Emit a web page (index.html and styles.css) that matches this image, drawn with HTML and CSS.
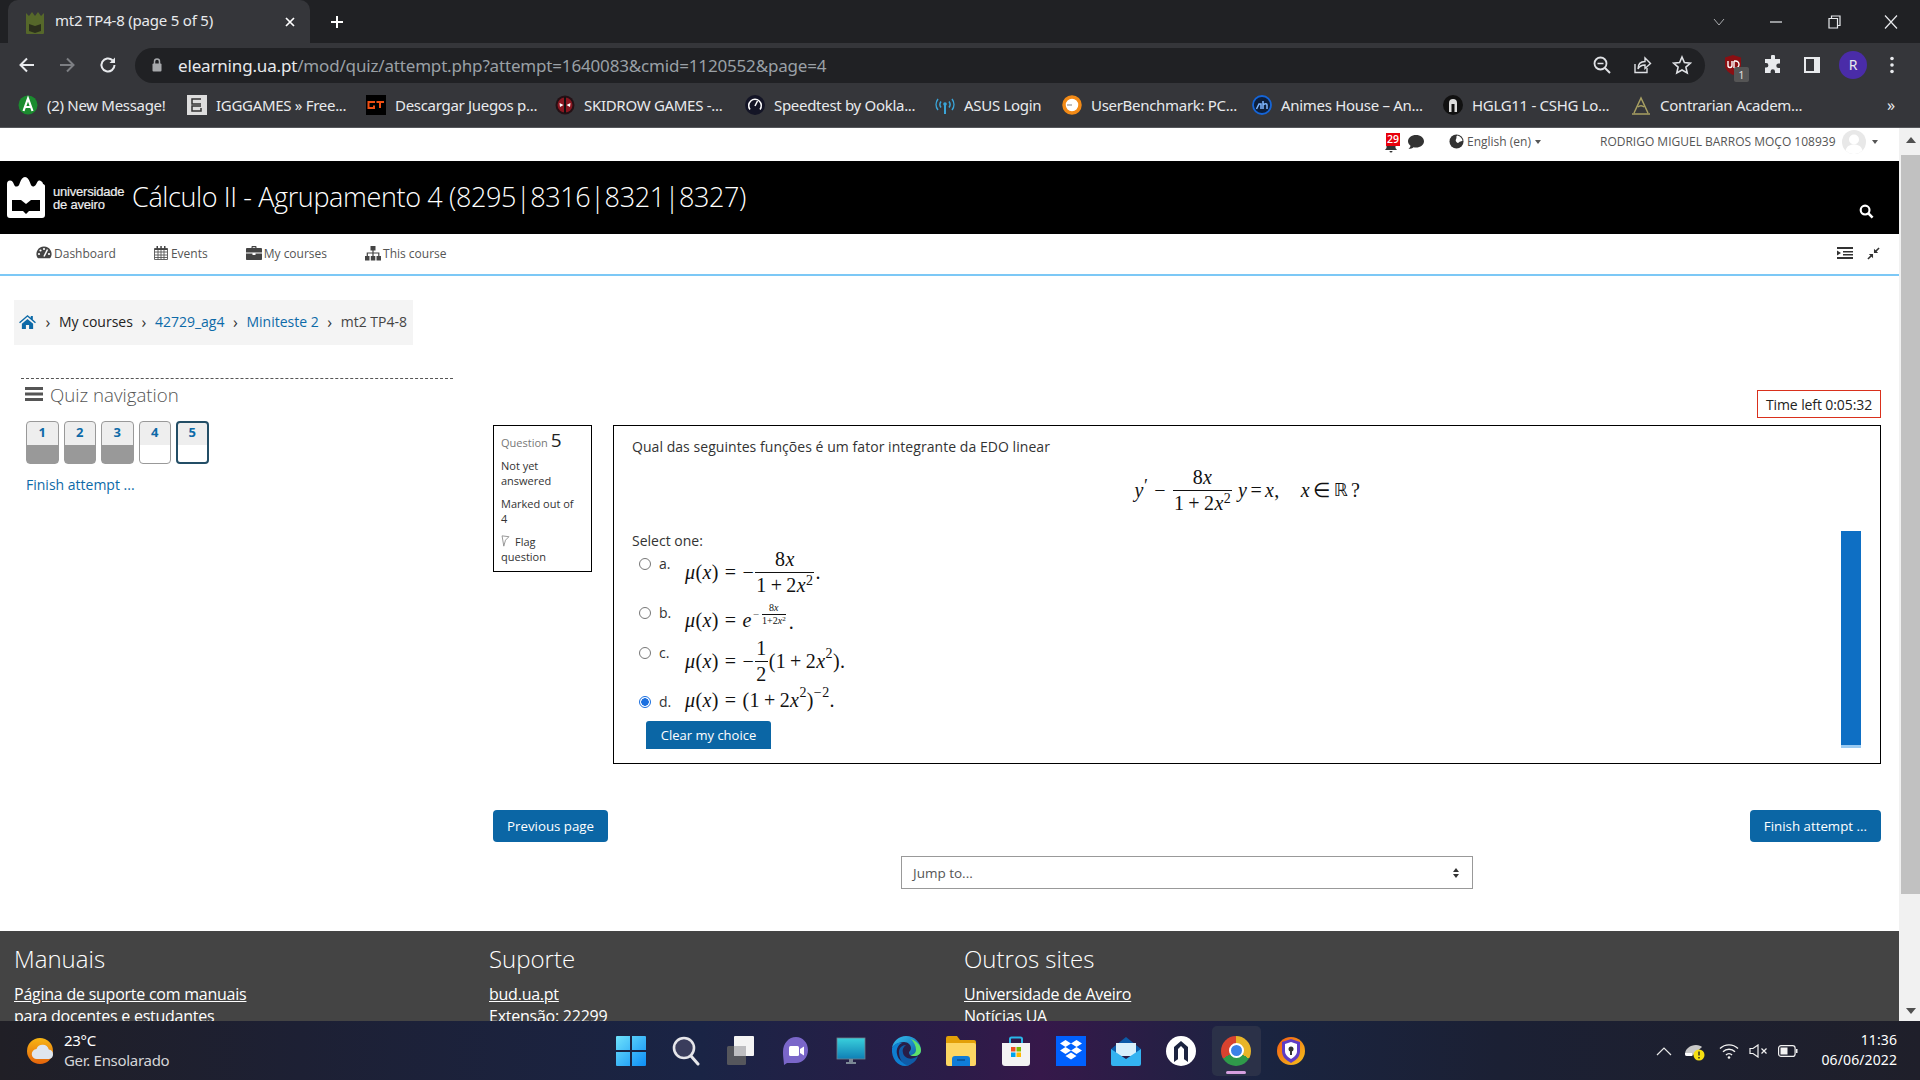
FILE: index.html
```html
<!DOCTYPE html>
<html lang="en">
<head>
<meta charset="utf-8">
<title>mt2 TP4-8 (page 5 of 5)</title>
<link rel="stylesheet" href="styles.css">
</head>
<body>
<div class="tabstrip">
  <div class="tab">
    <svg class="favicon" viewBox="0 0 20 24"><path fill="#56682a" d="M1 2l3 3 3-4 3 4 3-4 3 4 3-3v20a1 1 0 0 1-1 1H2a1 1 0 0 1-1-1z"/><path fill="#2b2f1c" d="M4 13l6 2 6-2v7l-6 2-6-2z"/></svg>
    <span class="tab-title">mt2 TP4-8 (page 5 of 5)</span>
    <svg class="tab-close" viewBox="0 0 12 12"><path d="M2 2l8 8M10 2l-8 8" stroke="#fff" stroke-width="1.7"/></svg>
  </div>
  <svg class="tab-new" viewBox="0 0 16 16"><path d="M8 2v12M2 8h12" stroke="#fff" stroke-width="2"/></svg>
  <div class="winctl">
    <svg viewBox="0 0 16 16" class="wc wc-down"><path d="M3 5l5 6 5-6" fill="none" stroke="#a9abae" stroke-width="1"/></svg>
    <svg viewBox="0 0 16 16" class="wc wc-min"><path d="M2 8h12" stroke="#e8eaed" stroke-width="1.2"/></svg>
    <svg viewBox="0 0 16 16" class="wc wc-max"><path d="M3 4.500h8.500V14H3zM5.500 4.500V2H14v9.500h-2.500" fill="none" stroke="#e8eaed" stroke-width="1.200"/></svg>
    <svg viewBox="0 0 16 16" class="wc wc-x"><path d="M2 1.500l12 13M14 1.500l-12 13" stroke="#e8eaed" stroke-width="1.200"/></svg>
  </div>
</div>

<div class="toolbar">
  <svg class="tb-ic back" viewBox="0 0 20 20"><path d="M17 10H4M10 3.500L3.500 10l6.500 6.500" fill="none" stroke="#e8eaed" stroke-width="2"/></svg>
  <svg class="tb-ic fwd" viewBox="0 0 20 20"><path d="M3 10h13M10 3.500l6.500 6.500-6.500 6.500" fill="none" stroke="#7d7f83" stroke-width="2"/></svg>
  <svg class="tb-ic reload" viewBox="0 0 20 20"><path d="M16.500 10a6.500 6.500 0 1 1-2-4.700" fill="none" stroke="#e8eaed" stroke-width="2"/><path d="M17 2.500v5.500h-5.500z" fill="#e8eaed"/></svg>
  <div class="omnibox">
    <svg class="lock" viewBox="0 0 12 16"><path d="M3.500 7V4.500a2.500 2.500 0 0 1 5 0V7" fill="none" stroke="#a7a9ac" stroke-width="1.500"/><rect x="1.500" y="6.500" width="9" height="8" rx="1" fill="#a7a9ac"/></svg>
    <span class="url"><span class="url-host">elearning.ua.pt</span>/mod/quiz/attempt.php?attempt=1640083&amp;cmid=1120552&amp;page=4</span>
    <svg class="omni-ic" viewBox="0 0 20 20"><circle cx="8.500" cy="8.500" r="6" fill="none" stroke="#dfe1e5" stroke-width="1.800"/><path d="M13 13l5 5" stroke="#dfe1e5" stroke-width="2"/><path d="M5.500 8.500h6" stroke="#dfe1e5" stroke-width="1.500"/></svg>
    <svg class="omni-ic" viewBox="0 0 20 20"><path d="M3 9v8.500h12V13" fill="none" stroke="#dfe1e5" stroke-width="1.400"/><path d="M6 14c0-5 3-7.500 7-7.500V3l5.500 5.500L13 13.500V10c-3 0-5.500 1-7 4z" fill="none" stroke="#dfe1e5" stroke-width="1.400"/></svg>
    <svg class="omni-ic" viewBox="0 0 20 20"><path d="M10 2l2.400 5.500 6 .6-4.500 4 1.300 5.900L10 15l-5.200 3 1.300-5.900-4.500-4 6-.6z" fill="none" stroke="#dfe1e5" stroke-width="1.600"/></svg>
  </div>
  <div class="ext">
    <svg class="ext-ub" viewBox="0 0 20 22"><path d="M10 1l8 2.500V11c0 5-4 8-8 10-4-2-8-5-8-10V3.500z" fill="#8a0f12"/><path d="M5 7v4.500a2 2 0 0 0 4 0V7M11 7v7M11 7h1.500a2.500 2.500 0 0 1 0 7H11" fill="none" stroke="#fff" stroke-width="1.400"/></svg>
    <span class="ext-badge">1</span>
  </div>
  <svg class="ext-puzzle" viewBox="0 0 20 20"><path fill="#e8eaed" d="M8 1.500a2 2 0 0 1 4 0V4h5v4.500h-1.500a2.200 2.200 0 0 0 0 4.400H17V18H12v-1.500a2.200 2.200 0 0 0-4.400 0V18H2v-5.500h1.200a2.200 2.200 0 0 0 0-4.400H2V4h6z"/></svg>
  <svg class="ext-side" viewBox="0 0 20 20"><path fill="none" stroke="#e8eaed" stroke-width="2" d="M3 3h14v14H3z"/><path fill="#e8eaed" d="M12 3h5v14h-5z"/></svg>
  <div class="profile">R</div>
  <svg class="kebab" viewBox="0 0 4 18"><circle cx="2" cy="2.500" r="1.800" fill="#e8eaed"/><circle cx="2" cy="9" r="1.800" fill="#e8eaed"/><circle cx="2" cy="15.500" r="1.800" fill="#e8eaed"/></svg>
</div>

<div class="bookmarks">
  <div class="bm"><svg class="bm-ic" viewBox="0 0 20 20"><circle cx="10" cy="10" r="9.500" fill="#1b8b2f"/><path d="M5.500 16L10 3.500 14.500 16M7.300 12h5.400" fill="none" stroke="#fff" stroke-width="2.200"/></svg><span>(2) New Message!</span></div>
  <div class="bm"><svg class="bm-ic" viewBox="0 0 20 20"><path fill="#ddd" d="M0 0h20v20H0z"/><path fill="none" stroke="#333" stroke-width="1.500" d="M14 4H5v5h9M14 11H5v5h9V13"/></svg><span>IGGGAMES » Free...</span></div>
  <div class="bm"><svg class="bm-ic" viewBox="0 0 20 20"><path d="M0 0h20v20H0z"/><path fill="none" stroke="#f04e12" stroke-width="2" d="M9 7H2.500v6H8v-2.500M10.500 7H18M14 7v6"/></svg><span>Descargar Juegos p...</span></div>
  <div class="bm"><svg class="bm-ic" viewBox="0 0 20 20"><circle cx="10" cy="10" r="9.500" fill="#241015"/><circle cx="10" cy="10" r="7.500" fill="#8a1620"/><path d="M10 2v16" stroke="#111" stroke-width="2"/><path d="M4.500 8l4 2-3.500 2zM15.500 8l-4 2 3.500 2z" fill="#fff"/></svg><span>SKIDROW GAMES -...</span></div>
  <div class="bm"><svg class="bm-ic" viewBox="0 0 20 20"><circle cx="10" cy="10" r="10" fill="#141526"/><path d="M5 14.500a6.300 6.300 0 1 1 10 0" fill="none" stroke="#fff" stroke-width="1.500"/><path d="M10 11l2.500-5" stroke="#fff" stroke-width="1.500"/></svg><span>Speedtest by Ookla...</span></div>
  <div class="bm"><svg class="bm-ic" viewBox="0 0 20 20"><g fill="none" stroke="#3aa5d8" stroke-width="1.500"><path d="M3 15a9 9 0 0 1 0-11M17 15a9 9 0 0 0 0-11M6 12.500a5 5 0 0 1 0-6M14 12.500a5 5 0 0 0 0-6"/></g><path d="M10 8v11" stroke="#3aa5d8" stroke-width="2"/><circle cx="10" cy="9" r="1.800" fill="#3aa5d8"/></svg><span>ASUS Login</span></div>
  <div class="bm"><svg class="bm-ic" viewBox="0 0 20 20"><circle cx="10" cy="10" r="8" fill="#fff" stroke="#f28a16" stroke-width="3.500"/><path d="M5 10h5" stroke="#aaa" stroke-width="1.500"/></svg><span>UserBenchmark: PC...</span></div>
  <div class="bm"><svg class="bm-ic" viewBox="0 0 20 20"><circle cx="10" cy="10" r="9" fill="#0d1f3c" stroke="#1565d8" stroke-width="1.800"/><path d="M4.500 14l2.500-5h2v5M11 6v8M11 10c2-2 4-1.500 4 0v4" fill="none" stroke="#7fb7ff" stroke-width="1.500"/></svg><span>Animes House – An...</span></div>
  <div class="bm"><svg class="bm-ic" viewBox="0 0 20 20"><circle cx="10" cy="10" r="10" fill="#111"/><path d="M6 17V8a4 4 0 0 1 8 0v9h-2.500V9H8.500v8z" fill="#ddd"/></svg><span>HGLG11 - CSHG Lo...</span></div>
  <div class="bm"><svg class="bm-ic" viewBox="0 0 20 20"><g fill="none" stroke="#a8a062" stroke-width="1.500"><path d="M3 18L10 3l7 15M1 19h18M7 12a4 4 0 0 1 6 0"/></g></svg><span>Contrarian Academ...</span></div>
  <div class="bm-more">»</div>
</div>

<div class="viewport">
  <div class="page">
    <div class="topbar">
      <div class="notif">
        <svg class="bell" viewBox="0 0 14 16"><path fill="#333" d="M7 2a4.500 4.500 0 0 1 4.500 4.500V11l1.500 2H1l1.500-2V6.500A4.500 4.500 0 0 1 7 2zM5.500 14h3a1.500 1.500 0 0 1-3 0z"/></svg>
        <span class="badge">29</span>
      </div>
      <svg class="msg" viewBox="0 0 18 16"><path fill="#333" d="M9 1c4.400 0 8 2.700 8 6.300s-3.600 6.300-8 6.300c-1 0-1.700-.1-2.500-.3C5.500 14.200 3.500 15 1.500 15c1-.9 1.800-2 2-3.200C2 10.700 1 9.100 1 7.300 1 3.700 4.600 1 9 1z"/></svg>
      <div class="lang">
        <svg class="globe" viewBox="0 0 16 16"><circle cx="8" cy="8" r="7.500" fill="#333"/><path fill="#fff" d="M9 1.500c3 .5 5 3 5.500 5.500-2 1.500-3 .5-4 2-1 1-2 .5-3-1s.5-3 .5-4-.5-2 1-2.500z"/></svg>
        <span>English ‎(en)‎</span><i class="caret"></i>
      </div>
      <div class="user">
        <span>RODRIGO MIGUEL BARROS MOÇO 108939</span>
        <svg class="avatar" viewBox="0 0 24 24"><circle cx="12" cy="12" r="12" fill="#e8e8e8"/><circle cx="12" cy="9.500" r="5" fill="#fff"/><path d="M3.500 20.500c1-4.500 5-6 8.500-6s7.500 1.500 8.500 6a12 12 0 0 1-17 0z" fill="#fff"/></svg>
        <i class="caret"></i>
      </div>
    </div>

    <header class="brand">
      <svg class="ua-logo" viewBox="0 0 38 41"><path fill="#fff" d="M0 7c0-2 1-3.500 3-3.500S6 5 7 7.500 9 9.500 10 9.500s2-1 3-4S15.500 0 18 0s4 2.500 5 5.500 2 4 3 4 2-.5 3-2 1.500-4 3-4 4 1.500 4 3.500c1 0 2 1 2 2v29a3 3 0 0 1-3 3H3a3 3 0 0 1-3-3z"/><path fill="#000" d="M5 23h9l5 4 5-4h9v11H22l-3 3-3-3H5z"/></svg>
      <div class="ua-name"><span>universidade</span><span>de aveiro</span></div>
      <h1 class="course">Cálculo II - Agrupamento 4 (8295|8316|8321|8327)</h1>
      <svg class="search" viewBox="0 0 16 16"><circle cx="6.500" cy="6.500" r="4.700" fill="none" stroke="#fff" stroke-width="2.300"/><path d="M10 10l4.500 4.500" stroke="#fff" stroke-width="2.800"/></svg>
    </header>

    <nav class="mainnav">
      <a class="nav-item nav-dash"><svg viewBox="0 0 16 16"><path fill="#444" d="M8 1.500a7.500 7.500 0 0 1 6.500 11.300c-.2.300-.4.400-.7.400H2.200c-.3 0-.5-.1-.7-.4A7.500 7.500 0 0 1 8 1.500z"/><g fill="#fff"><circle cx="8" cy="4" r="1.100"/><circle cx="4.500" cy="5.500" r="1.100"/><circle cx="3" cy="9" r="1.100"/><circle cx="13" cy="9" r="1.100"/></g><path d="M8 11.500L11.500 4.500" stroke="#fff" stroke-width="1.500"/></svg>Dashboard</a>
      <a class="nav-item nav-ev"><svg viewBox="0 0 16 16"><path fill="none" stroke="#555" stroke-width=".9" d="M1.500 3.500h13v11h-13zM1.500 7h13M1.500 10h13M1.500 12.500h13M5 3.500v11M8 3.500v11M11 3.500v11"/><path fill="#444" d="M1.500 3.500h13V5h-13zM3.500 1h1.500v3H3.500zM7.300 1h1.500v3H7.300zM11 1h1.500v3H11z"/></svg>Events</a>
      <a class="nav-item nav-my"><svg viewBox="0 0 16 16"><path fill="#444" d="M5.500 3V1.800c0-.4.300-.8.800-.8h3.400c.5 0 .8.400.8.800V3H15c.5 0 1 .5 1 1v3.500H0V4c0-.5.500-1 1-1zM6.700 3h2.600V2.200H6.700zM0 8.500h6.500V10h3V8.500H16V14c0 .6-.4 1-1 1H1c-.6 0-1-.4-1-1z"/></svg>My courses</a>
      <a class="nav-item nav-this"><svg viewBox="0 0 16 16"><path fill="#444" d="M5.500 1h5v4.500h-5zM0 11h4.500v4.500H0zM5.800 11h4.500v4.500H5.800zM11.500 11H16v4.500h-4.500z"/><path fill="none" stroke="#444" stroke-width="1.200" d="M8 5v6M2.300 11V8h11.500v3"/></svg>This course</a>
      <div class="nav-right">
        <svg class="nav-list" viewBox="0 0 16 14"><path fill="#333" d="M0 1h16v2H0zM6 5h10v1.500H6zM6 8h10v1.500H6zM0 11h16v2H0zM0 4.500L4 7l-4 2.500z"/></svg>
        <svg class="nav-comp" viewBox="0 0 14 14"><path d="M1 13l4-4M9 5l4-4" stroke="#333" stroke-width="1.600"/><path fill="#333" d="M2 7.500h4.500V12zM12 6.500H7.500V2z"/></svg>
      </div>
    </nav>

    <div class="crumb">
      <svg class="home" viewBox="0 0 18 16"><path fill="#0d6aa8" d="M9 1l3.500 3V2.200h2.200v3.700L18 8.700l-1 1.100-8-6.800-8 6.800-1-1.100zM3 10.500L9 5.300l6 5.200V16h-4.300v-4.300H7.300V16H3z"/></svg>
      <span class="sep">›</span><a class="crumb-dark">My courses</a>
      <span class="sep">›</span><a class="crumb-link">42729_ag4</a>
      <span class="sep">›</span><a class="crumb-link">Miniteste 2</a>
      <span class="sep">›</span><a class="crumb-cur">mt2 TP4-8</a>
    </div>

    <div class="layout">
      <aside class="side">
        <h2 class="side-title"><svg viewBox="0 0 18 14"><path fill="#555" d="M0 0h18v3H0zM0 5.500h18v3H0zM0 11h18v3H0z"/></svg>Quiz navigation</h2>
        <div class="qnav">
          <a class="qbtn done">1</a>
          <a class="qbtn done">2</a>
          <a class="qbtn done">3</a>
          <a class="qbtn">4</a>
          <a class="qbtn cur">5</a>
        </div>
        <a class="finish-link">Finish attempt ...</a>
      </aside>

      <main class="quiz">
        <div class="timer-row"><div class="timer">Time left 0:05:32</div></div>
        <div class="que">
          <div class="info">
            <div class="qno">Question <b>5</b></div>
            <p>Not yet answered</p>
            <p>Marked out of 4</p>
            <p class="flag"><svg viewBox="0 0 10 14"><path d="M1 1l8 1-4 4-2 7z" fill="none" stroke="#888" stroke-width="1"/></svg>Flag question</p>
          </div>
          <div class="content">
            <div class="qtext">Qual das seguintes funções é um fator integrante da EDO linear</div>
            <div class="display">
              <span class="m"><i>y</i><sup class="prime">′</sup><span class="op">−</span><span class="fr"><span class="nu">8<i>x</i></span><span class="de">1<span class="bin">+</span>2<i>x</i><sup>2</sup></span></span><i class="sp">y</i><span class="rel rel-t">=</span><i>x</i>,<span class="quad"></span><i>x</i><span class="rel rel-t">∈</span><span class="bbb">ℝ</span><span class="qm">?</span></span>
            </div>
            <div class="prompt">Select one:</div>
            <div class="opts">
              <div class="opt opt-a"><span class="radio"></span><span class="let">a.</span><span class="m"><i>μ</i>(<i>x</i>)<span class="rel">=</span>−<span class="fr"><span class="nu">8<i>x</i></span><span class="de">1<span class="bin">+</span>2<i>x</i><sup>2</sup></span></span>.</span></div>
              <div class="opt opt-b"><span class="radio"></span><span class="let">b.</span><span class="m"><i>μ</i>(<i>x</i>)<span class="rel">=</span><i>e</i><span class="expo"><span class="mini">−</span><span class="fr fr-mini"><span class="nu">8<i>x</i></span><span class="de">1+2<i>x</i><sup>2</sup></span></span></span><span class="dot">.</span></span></div>
              <div class="opt opt-c"><span class="radio"></span><span class="let">c.</span><span class="m"><i>μ</i>(<i>x</i>)<span class="rel">=</span>−<span class="fr"><span class="nu">1</span><span class="de">2</span></span>(1<span class="bin">+</span>2<i>x</i><sup>2</sup>).</span></div>
              <div class="opt opt-d"><span class="radio on"></span><span class="let">d.</span><span class="m"><i>μ</i>(<i>x</i>)<span class="rel">=</span>(1<span class="bin">+</span>2<i>x</i><sup>2</sup>)<sup>−2</sup>.</span></div>
            </div>
            <button class="clear">Clear my choice</button>
            <span class="vbar"></span>
          </div>
        </div>
        <div class="pager">
          <button class="btn">Previous page</button>
          <button class="btn">Finish attempt ...</button>
        </div>
        <div class="jump-row">
          <div class="jump"><span>Jump to...</span><svg viewBox="0 0 8 12"><path fill="#333" d="M4 1l3 4H1zM4 11L1 7h6z"/></svg></div>
        </div>
      </main>
    </div>

    <footer class="foot">
      <div class="foot-col"><h3>Manuais</h3><a>Página de suporte com manuais</a><a>para docentes e estudantes</a></div>
      <div class="foot-col"><h3>Suporte</h3><a>bud.ua.pt</a><p>Extensão: 22299</p></div>
      <div class="foot-col"><h3>Outros sites</h3><a>Universidade de Aveiro</a><a>Notícias UA</a></div>
    </footer>
  </div>
  <div class="scroll">
    <div class="sc-arrow"><i class="up"></i></div>
    <div class="sc-track"><div class="sc-thumb"></div></div>
    <div class="sc-arrow"><i class="down"></i></div>
  </div>
</div>

<div class="taskbar">
  <div class="weather">
    <svg viewBox="0 0 28 28"><defs><linearGradient id="sun" x1="0" x2="0" y1="0" y2="1"><stop offset="0" stop-color="#f7b614"/><stop offset="1" stop-color="#e5640c"/></linearGradient></defs><circle cx="13" cy="14" r="13" fill="url(#sun)"/><path fill="#dfe6ee" d="M10 22a5 5 0 0 1-.5-10 6.500 6.500 0 0 1 12.300.5A4.800 4.800 0 0 1 22 22z"/></svg>
    <div class="w-text"><span>23°C</span><span class="w-sub">Ger. Ensolarado</span></div>
  </div>
  <div class="apps">
    <svg class="app" viewBox="0 0 30 30"><defs><linearGradient id="win" x1="0" x2="1" y1="0" y2="1"><stop offset="0" stop-color="#6fe2fb"/><stop offset="1" stop-color="#0d8ef5"/></linearGradient></defs><path fill="url(#win)" d="M0 1a1 1 0 0 1 1-1h13v14H0zM16 0h13a1 1 0 0 1 1 1v13H16zM0 16h14v14H1a1 1 0 0 1-1-1zM16 16h14v13a1 1 0 0 1-1 1H16z"/></svg>
    <svg class="app" viewBox="0 0 30 30"><circle cx="13" cy="12" r="10" fill="#3a3d5c" stroke="#e6e6ea" stroke-width="2.600"/><path d="M20 20l7 8" stroke="#e6e6ea" stroke-width="3" stroke-linecap="round"/></svg>
    <svg class="app" viewBox="0 0 30 30"><rect x="1" y="10" width="19" height="19" rx="1.500" fill="#55565c"/><rect x="8" y="0" width="20" height="20" rx="1" fill="#f4f4f4"/><rect x="8" y="10" width="12" height="10" fill="#bdbdc0"/></svg>
    <svg class="app" viewBox="0 0 30 30"><path fill="#7a66c9" d="M15 1c7 0 12 6 12 13s-5 13-12 13H6l-3 2c0-4-1-7-1-13C2 7 8 1 15 1z"/><rect x="8" y="10" width="10" height="10" rx="1.500" fill="#fff"/><path fill="#fff" d="M19 13l4-2.500v9L19 17z"/></svg>
    <svg class="app" viewBox="0 0 30 30"><defs><linearGradient id="mon" x1="0" x2="0" y1="0" y2="1"><stop offset="0" stop-color="#39d0dc"/><stop offset="1" stop-color="#0f7fb5"/></linearGradient></defs><rect x="1" y="2" width="28" height="21" fill="url(#mon)" stroke="#6f7f8c" stroke-width=".800"/><path fill="#7b8794" d="M13 23h4v3h-4zM10 26h10v2H10z"/></svg>
    <svg class="app" viewBox="0 0 30 30"><defs><linearGradient id="ed" x1="0" x2="1" y1="0" y2="1"><stop offset="0" stop-color="#35c1f1"/><stop offset="1" stop-color="#0c59a4"/></linearGradient></defs><path fill="url(#ed)" d="M15 0c9 0 15 7 15 14 0 4-3 6-7 6-3 0-5-1-5-3 0-2 2-2 2-5 0-3-3-6-7-6C7 6 2 10 1 12 2 5 8 0 15 0z"/><path fill="#0e7ed0" d="M1 12c2-4 6-6 10-5-4 2-6 6-5 11 1 6 7 11 14 10-2 1-3 2-6 2C7 30 0 23 1 12z"/><path fill="#0f5ca8" d="M8 16c0-4 3-7 7-7-3 2-4 5-3 8 1 4 6 7 11 5 2-.8 3-1.500 4-2-2 6-7 9-11 9-5-1-8-7-8-13z"/><path fill="#5fe06a" d="M20 3c5 2 10 6 10 11 0 4-3 6-7 6-2 0-3-.5-4-1 3 0 6-2 6-5 0-4-2-8-5-11z"/></svg>
    <svg class="app" viewBox="0 0 30 30"><path fill="#e2a008" d="M0 2a2 2 0 0 1 2-2h9l3 4h14a2 2 0 0 1 2 2v6H0z"/><path fill="#fcd663" d="M0 7h28a2 2 0 0 1 2 2v19a2 2 0 0 1-2 2H2a2 2 0 0 1-2-2z"/><path fill="#0f7cd8" d="M6 30v-7a3 3 0 0 1 3-3h12a3 3 0 0 1 3 3v7z"/><path d="M11 24h8" stroke="#0a4f91" stroke-width="1.500"/></svg>
    <svg class="app" viewBox="0 0 30 30"><path d="M9 7V3a1.500 1.500 0 0 1 1.500-1.500h9A1.500 1.500 0 0 1 21 3v4" fill="none" stroke="#29b6e8" stroke-width="2"/><path fill="#f3f3f3" d="M1 7h28v20a3 3 0 0 1-3 3H4a3 3 0 0 1-3-3z"/><path fill="#f25022" d="M10 11h4.500v4.500H10z"/><path fill="#7fba00" d="M15.500 11H20v4.500h-4.500z"/><path fill="#00a4ef" d="M10 16.500h4.500V21H10z"/><path fill="#ffb900" d="M15.500 16.500H20V21h-4.500z"/></svg>
    <svg class="app" viewBox="0 0 30 30"><path fill="#0061fe" d="M0 0h30v30H0z"/><path fill="#fff" d="M9.500 4L15 7.500 9.500 11 4 7.500zM20.500 4L26 7.500 20.500 11 15 7.500zM9.500 11L15 14.500 9.500 18 4 14.500zM20.500 11L26 14.500 20.500 18 15 14.500zM15 16.500l5.500 3.500L15 23.500 9.500 20z"/></svg>
    <svg class="app" viewBox="0 0 30 30"><path fill="#0c5ba8" d="M15 1l15 12v3H0v-3z"/><path fill="#d8f0fb" d="M5 7h20v13H5z"/><path fill="#34b3f1" d="M0 13l15 10 15-10v15a2 2 0 0 1-2 2H2a2 2 0 0 1-2-2z"/></svg>
    <svg class="app" viewBox="0 0 30 30"><circle cx="15" cy="15" r="15" fill="#fff"/><path d="M8 26V11l7-6 7 6v15l-7-5z" fill="#1c2440"/><path d="M12 24V13l3-3 3 3v11l-3-2z" fill="#fff"/></svg>
    <div class="app-active">
      <div class="chrome"><div class="chrome-in"></div></div>
      <span class="run"></span>
    </div>
    <svg class="app" viewBox="0 0 30 30"><defs><linearGradient id="av" x1="0" x2="1" y1="0" y2="1"><stop offset="0" stop-color="#f25a12"/><stop offset="1" stop-color="#f6c21c"/></linearGradient></defs><circle cx="15" cy="15" r="14" fill="url(#av)"/><path d="M15 3l9 3v9c0 6-4 9-9 12-5-3-9-6-9-12V6z" fill="#5f3dc4"/><path d="M15 6l6 2v7c0 4-3 6-6 8-3-2-6-4-6-8V8z" fill="#fff"/><circle cx="15" cy="13" r="2.500" fill="#333"/><path d="M14 14h2v5h-2z" fill="#333"/></svg>
  </div>
  <div class="tray">
    <svg class="tr-chev" viewBox="0 0 16 10"><path d="M1 9l7-7 7 7" fill="none" stroke="#e8e8e8" stroke-width="1.200"/></svg>
    <svg class="tr-cloud" viewBox="0 0 22 20"><path fill="#c9c9c9" d="M1 13c0-5 5-9 11-9 3 0 5 1 6 2L8 15H3a2 2 0 0 1-2-2z"/><path fill="#fff" d="M1 12h7v3H3a2 2 0 0 1-2-2z"/><circle cx="15" cy="14" r="5.500" fill="#f6e012"/><path d="M15 10.500v4M15 16v1.500" stroke="#222" stroke-width="1.400"/></svg>
    <svg class="tr-wifi" viewBox="0 0 20 16"><path d="M1 5.500a13 13 0 0 1 18 0M4 8.800a8.500 8.500 0 0 1 12 0M7 12a4 4 0 0 1 6 0" fill="none" stroke="#f2f2f2" stroke-width="1.400"/><circle cx="10" cy="14.500" r="1.300" fill="#f2f2f2"/></svg>
    <svg class="tr-vol" viewBox="0 0 20 14"><path d="M1 4.500h3L9 1v12L4 9.500H1z" fill="none" stroke="#f2f2f2" stroke-width="1.200"/><path d="M12.500 4.500l5 5M17.500 4.500l-5 5" stroke="#f2f2f2" stroke-width="1.200"/></svg>
    <svg class="tr-bat" viewBox="0 0 20 12"><rect x=".6" y=".6" width="16.500" height="10.800" rx="2.500" fill="none" stroke="#f2f2f2" stroke-width="1.200"/><rect x="2.500" y="2.500" width="7" height="7" fill="#f2f2f2"/><path d="M18 4h1.500v4H18z" fill="#f2f2f2"/></svg>
    <div class="clock"><span>11:36</span><span>06/06/2022</span></div>
  </div>
</div>
</body>
</html>
```
FILE: styles.css
```css
*{box-sizing:border-box}
html,body{margin:0;padding:0;height:100%}
body{width:1920px;height:1080px;overflow:hidden;display:flex;flex-direction:column;font-family:"Open Sans",sans-serif;background:#fff;color:#333}
svg{display:block;flex:none}
a{text-decoration:none}

/* tab strip */
.tabstrip{height:43px;background:#202124;display:flex;align-items:flex-end;flex:none}
.tab{width:302px;height:43px;margin-left:8px;background:#35363a;border-radius:10px 10px 0 0;display:flex;align-items:center;padding:0 14px 0 17px;color:#e8eaed}
.favicon{width:20px;height:24px;margin-top:2px}
.tab-title{margin-left:10px;font:15px "Noto Sans",sans-serif;white-space:nowrap;letter-spacing:-.2px;flex:1;padding-bottom:3px}
.tab-close{width:12px;height:12px}
.tab-new{width:16px;height:16px;margin:0 0 13px 19px}
.winctl{margin-left:auto;height:43px;display:flex;align-items:center}
.wc{width:16px;height:16px}
.wc-down{margin-right:41px}
.wc-min{margin-right:42px}
.wc-max{margin-right:41px}
.wc-x{margin-right:21px}

/* toolbar */
.toolbar{height:44px;background:#35363a;display:flex;align-items:center;flex:none;padding-left:17px}
.tb-ic{width:20px;height:20px}
.fwd{margin-left:20px}
.reload{margin-left:21px}
.omnibox{width:1570px;height:35px;margin-left:17px;background:#202124;border-radius:18px;display:flex;align-items:center;padding-left:16px}
.lock{width:12px;height:16px}
.url{margin-left:15px;font:17px "Noto Sans",sans-serif;color:#9aa0a6;white-space:nowrap;letter-spacing:-.17px;width:1414px;flex:none}
.url-host{color:#e8eaed}
.omni-ic{width:20px;height:20px;margin-right:20px}
.omni-ic:last-child{margin-right:0}
.ext{position:relative;width:20px;height:22px;margin-left:18px}
.ext-ub{width:20px;height:22px}
.ext-badge{position:absolute;left:11px;top:13px;width:15px;height:15px;background:#555;color:#ddd;font:11px "Noto Sans",sans-serif;line-height:15px;text-align:center;border-radius:2px}
.ext-puzzle{width:20px;height:20px;margin-left:20px}
.ext-side{width:20px;height:20px;margin-left:19px}
.profile{width:28px;height:28px;margin-left:17px;border-radius:50%;background:#4a2ca8;color:#e8eaed;font:14px "Noto Sans",sans-serif;text-align:center;line-height:28px}
.kebab{width:4px;height:18px;margin-left:23px}

/* bookmarks */
.bookmarks{height:41px;background:#35363a;display:grid;grid-template-columns:169px 179px 189px 190px 190px 127px 190px 191px 188px 262px 1fr;align-items:center;padding:0 0 4px 18px;flex:none;border-bottom:1px solid #55575b}
.bm{display:flex;align-items:center;color:#e8eaed;font:15px "Noto Sans",sans-serif;white-space:nowrap;letter-spacing:-.3px}
.bm-ic{width:20px;height:20px;margin-right:9px}
.bm-more{color:#e8eaed;font:16px "Noto Sans",sans-serif;margin-left:-6px}

/* viewport */
.viewport{flex:1;display:flex;min-height:0}
.page{width:1899px;flex:none;overflow:hidden;background:#fff}

.topbar{height:33px;display:flex;align-items:center;font-size:12px;color:#555;padding:0 0 6px 1384px;white-space:nowrap}
.notif{position:relative;width:14px;height:16px}
.bell{width:14px;height:16px;margin-top:3px}
.badge{position:absolute;left:2px;top:-1px;width:14px;height:13px;background:#e8000b;color:#fff;font:600 10.500px/13px "Open Sans",sans-serif;text-align:center}
.msg{width:18px;height:16px;margin-left:9px}
.lang{display:flex;align-items:center;margin-left:24px}
.globe{width:15px;height:15px;margin-right:3px}
.caret{display:inline-block;width:0;height:0;border:3.500px solid transparent;border-top:4px solid #555;border-bottom:0;margin-left:4px}
.user{display:flex;align-items:center;margin-left:59px}
.avatar{width:24px;height:24px;margin-left:6px}
.user .caret{margin-left:6px}

.brand{height:73px;background:#000;display:flex;align-items:center;padding-left:7px;position:relative;color:#fff}
.ua-logo{width:38px;height:41px;margin-right:2px}
.ua-name{display:flex;flex-direction:column;margin-left:6px;font:13px/13px "Liberation Sans",sans-serif;color:#eee;letter-spacing:-.2px;width:79px;-webkit-text-stroke:.2px #eee}
.course{margin:0;font:300 27px "Open Sans",sans-serif;color:#fff;white-space:nowrap;letter-spacing:-.38px;padding-bottom:3px}
.search{position:absolute;right:25px;top:43px;width:15px;height:15px}

.mainnav{height:42px;border-bottom:2px solid #7cc8f6;display:flex;align-items:center;padding:0 0 2px 36px;font-size:12px;color:#555}
.nav-item{display:flex;align-items:center;color:#555}
.nav-item svg{width:16px;height:16px;margin-right:2px}
.nav-ev{margin-left:37px}
.nav-my{margin-left:38px}
.nav-this{margin-left:38px}
.nav-right{margin-left:auto;display:flex;align-items:center;padding-right:19px}
.nav-list{width:16px;height:14px}
.nav-comp{width:13px;height:13px;margin-left:14px}

.crumb{margin:24px 0 0 14px;width:399px;height:45px;background:#f4f4f4;display:flex;align-items:center;padding:0 0 2px 5px;font-size:14px}
.home{width:17px;height:15px;margin-right:1px}
.sep{width:22px;text-align:center;color:#333;font-size:16px}
.crumb-dark{color:#222}
.crumb-link{color:#0d6aa8}
.crumb-cur{color:#444}

.layout{display:flex;margin-top:33px}
.side{width:432px;margin-left:21px;border-top:1px dashed #555;flex:none;padding:0 4px}
.side-title{margin:3px 0 0;height:24px;display:flex;align-items:center;font:300 18.700px "Open Sans",sans-serif;color:#555}
.side-title svg{width:18px;height:14px;margin-right:7px}
.qnav{display:flex;gap:5px;margin-top:15px;padding-left:1px}
.qbtn{width:32.500px;height:43px;border:1px solid #999;border-radius:4px;font-size:13px;font-weight:700;color:#0d6aa8;text-align:center;background:linear-gradient(#eee 23px,#fff 23px);line-height:20px;overflow:hidden;flex:none}
.qbtn.done{background:linear-gradient(#eee 23px,#999 23px)}
.qbtn.cur{border:2px solid #234e66;line-height:18px;background:linear-gradient(#eee 22px,#fff 22px)}
.finish-link{display:block;margin:11px 0 0 1px;font-size:14px;color:#0d6aa8}

.quiz{margin-left:40px;width:1388px;flex:none;padding-top:12px}
.timer-row{display:flex;justify-content:flex-end;margin-bottom:7px}
.timer{width:124px;height:28px;border:1px solid #d9301c;font-size:14px;line-height:27px;text-align:center;color:#222;white-space:nowrap;letter-spacing:-.1px}
.que{display:flex;align-items:flex-start}
.info{width:99px;height:147px;border:1px solid #000;padding:5px 12px 5px 7px;font-size:11px;line-height:15px;color:#333;flex:none}
.qno{color:#777;height:24px;white-space:nowrap}
.qno b{font-weight:400;font-size:19px;color:#222;line-height:18px}
.info p{margin:3px 0 8px}
.flag svg{display:inline-block;width:9px;height:12px;margin-right:5px;vertical-align:-1px}
.content{margin-left:21px;width:1268px;height:339px;border:1px solid #000;padding:11px 17px 0 18px;position:relative;font-size:14px;color:#333;flex:none}
.qtext{line-height:20px;letter-spacing:.05px;white-space:nowrap}
.display{height:50px;margin-top:7px;display:flex;align-items:center;justify-content:center}
.display .m{margin-top:1px}
.prompt{margin-top:17px;line-height:20px}
.opts{margin-top:1px;padding-left:4px}
.opt{display:flex;align-items:flex-start}
.opt-a{height:50px;padding-top:1px}
.opt-b{height:39px}
.opt-c{height:50px;padding-top:1px}
.opt-d{height:29px}
.radio{width:12px;height:12px;margin:5px 0 0 3px;border:1px solid #767676;border-radius:50%;background:#fff;flex:none}
.radio.on{border:1.500px solid #1a6fe0;background:radial-gradient(circle,#1a6fe0 0 3.500px,#fff 4px)}
.let{width:26px;margin:1px 0 0 8px;line-height:20px;flex:none}
.clear{display:block;margin:1px 0 0 14px;width:125px;height:28px;background:#0b66a5;border:0;border-radius:3px 3px 0 0;color:#fff;font:13px "Open Sans",sans-serif;padding:0}
.vbar{position:absolute;left:1227px;top:105px;width:20px;height:217px;background:linear-gradient(#0e6fc4 214px,#9bcbf2 214px)}

/* math */
.m{font:20px "Liberation Serif",serif;color:#111;display:inline-flex;align-items:center;white-space:nowrap;line-height:22px;letter-spacing:.4px}
.m i{font-style:italic}
.m sup{position:relative;top:-7px;font-size:14px;line-height:0;vertical-align:baseline}
.fr{display:inline-flex;flex-direction:column;align-items:center;margin:0 1px}
.nu{padding:0 1px 2px;line-height:22px}
.de{border-top:1px solid #111;padding:1px 1px 0;line-height:22px}
.bin{margin:0 4px}
.op{margin:0 6px}
.rel{margin:0 6px}
.rel-t{margin:0 3px}
.m .prime{font-size:18px;top:-4px}
.sp{margin-left:5px}
.quad{width:21px}
.bbb{font-family:"DejaVu Sans",sans-serif;font-size:18px}
.qm{margin-left:3px}
.opt .m{min-height:22px;margin-top:-2px}
.opt-a .m,.opt-c .m{height:44px;margin-top:-3px}
.opt-b .m{height:40px}
.expo{display:inline-flex;align-items:center;margin:-12px 2px 0 1px;letter-spacing:0}
.mini{font-size:11px;color:#555;margin-right:2px}
.fr-mini{font-size:10px}
.fr-mini .nu{line-height:10px;padding:0 1px 1px}
.fr-mini .de{line-height:10px;padding:1px 0 0}
.m .fr-mini sup{font-size:7px;top:-3px}
.dot{margin-top:4px}

.pager{display:flex;justify-content:space-between;margin-top:46px}
.btn{height:32px;padding:0 14px;background:#0b66a5;border:0;border-radius:4px;color:#fff;font:13.300px "Open Sans",sans-serif}
.jump-row{display:flex;justify-content:center;margin-top:14px}
.jump{width:572px;height:33px;border:1px solid #999;display:flex;align-items:center;justify-content:space-between;padding:0 12px 0 11px;font-size:13.500px;color:#555}
.jump svg{width:8px;height:12px}

.foot{margin-top:42px;height:200px;background:#444;display:grid;grid-template-columns:475px 475px 475px;padding:11px 0 0 14px;color:#fff}
.foot-col h3{margin:0 0 7px;font:300 24px/34px "Open Sans",sans-serif;color:#fff}
.foot-col a,.foot-col p{display:block;margin:0;font-size:16px;line-height:22px;color:#fff;letter-spacing:-.24px}
.foot-col a:first-of-type{text-decoration:underline}

/* scrollbar */
.scroll{width:21px;flex:none;background:#f1f1f1;display:flex;flex-direction:column;padding:2px 0 0 2px}
.sc-arrow{height:20px;display:flex;align-items:center;justify-content:center}
.sc-arrow .up{width:0;height:0;border:5px solid transparent;border-bottom:6px solid #505050;border-top:0}
.sc-arrow .down{width:0;height:0;border:5px solid transparent;border-top:6px solid #505050;border-bottom:0}
.sc-track{flex:1;padding-top:5px}
.sc-thumb{height:739px;background:#c1c1c1}

/* taskbar */
.taskbar{height:59px;flex:none;display:flex;align-items:center;color:#fff;background:linear-gradient(90deg,#201f26 0,#1d2034 300px,#1a2445 700px,#2b1c48 950px,#36184a 1040px,#1a2440 1260px,#1b2034 1500px,#1f1f2a 1920px)}
.weather{display:flex;align-items:center;width:616px;padding-left:27px}
.weather svg{width:28px;height:28px}
.w-text{display:flex;flex-direction:column;margin-left:9px;padding-bottom:2px;font:15px/20px "Noto Sans",sans-serif;letter-spacing:-.3px}
.w-sub{color:#d5d5d8}
.apps{display:flex;align-items:center;gap:25px}
.app{width:30px;height:30px}
.app-active{position:relative;width:30px;height:30px}
.app-active::before{content:"";position:absolute;left:-9px;top:-10px;width:49px;height:50px;border-radius:5px;background:#2b3148}
.chrome{position:relative;width:30px;height:30px;border-radius:50%;background:conic-gradient(#e8b528 0 120deg,#2f9a4a 120deg 240deg,#d8432f 240deg 360deg);display:flex;align-items:center;justify-content:center}
.chrome-in{border-radius:50%;background:#3b82e8;border:2px solid #fff;box-sizing:content-box;width:11px;height:11px}
.run{position:absolute;left:5px;top:35px;width:20px;height:3px;border-radius:2px;background:#d6a0e0}
.tray{margin-left:auto;display:flex;align-items:center;padding-right:23px}
.tr-chev{width:16px;height:10px}
.tr-cloud{width:22px;height:20px;margin-left:12px}
.tr-wifi{width:20px;height:16px;margin-left:13px}
.tr-vol{width:20px;height:14px;margin-left:10px}
.tr-bat{width:20px;height:12px;margin-left:9px}
.clock{display:flex;flex-direction:column;align-items:flex-end;margin-left:24px;padding-bottom:2px;font:14px/20px "Noto Sans",sans-serif;letter-spacing:.1px}
```
